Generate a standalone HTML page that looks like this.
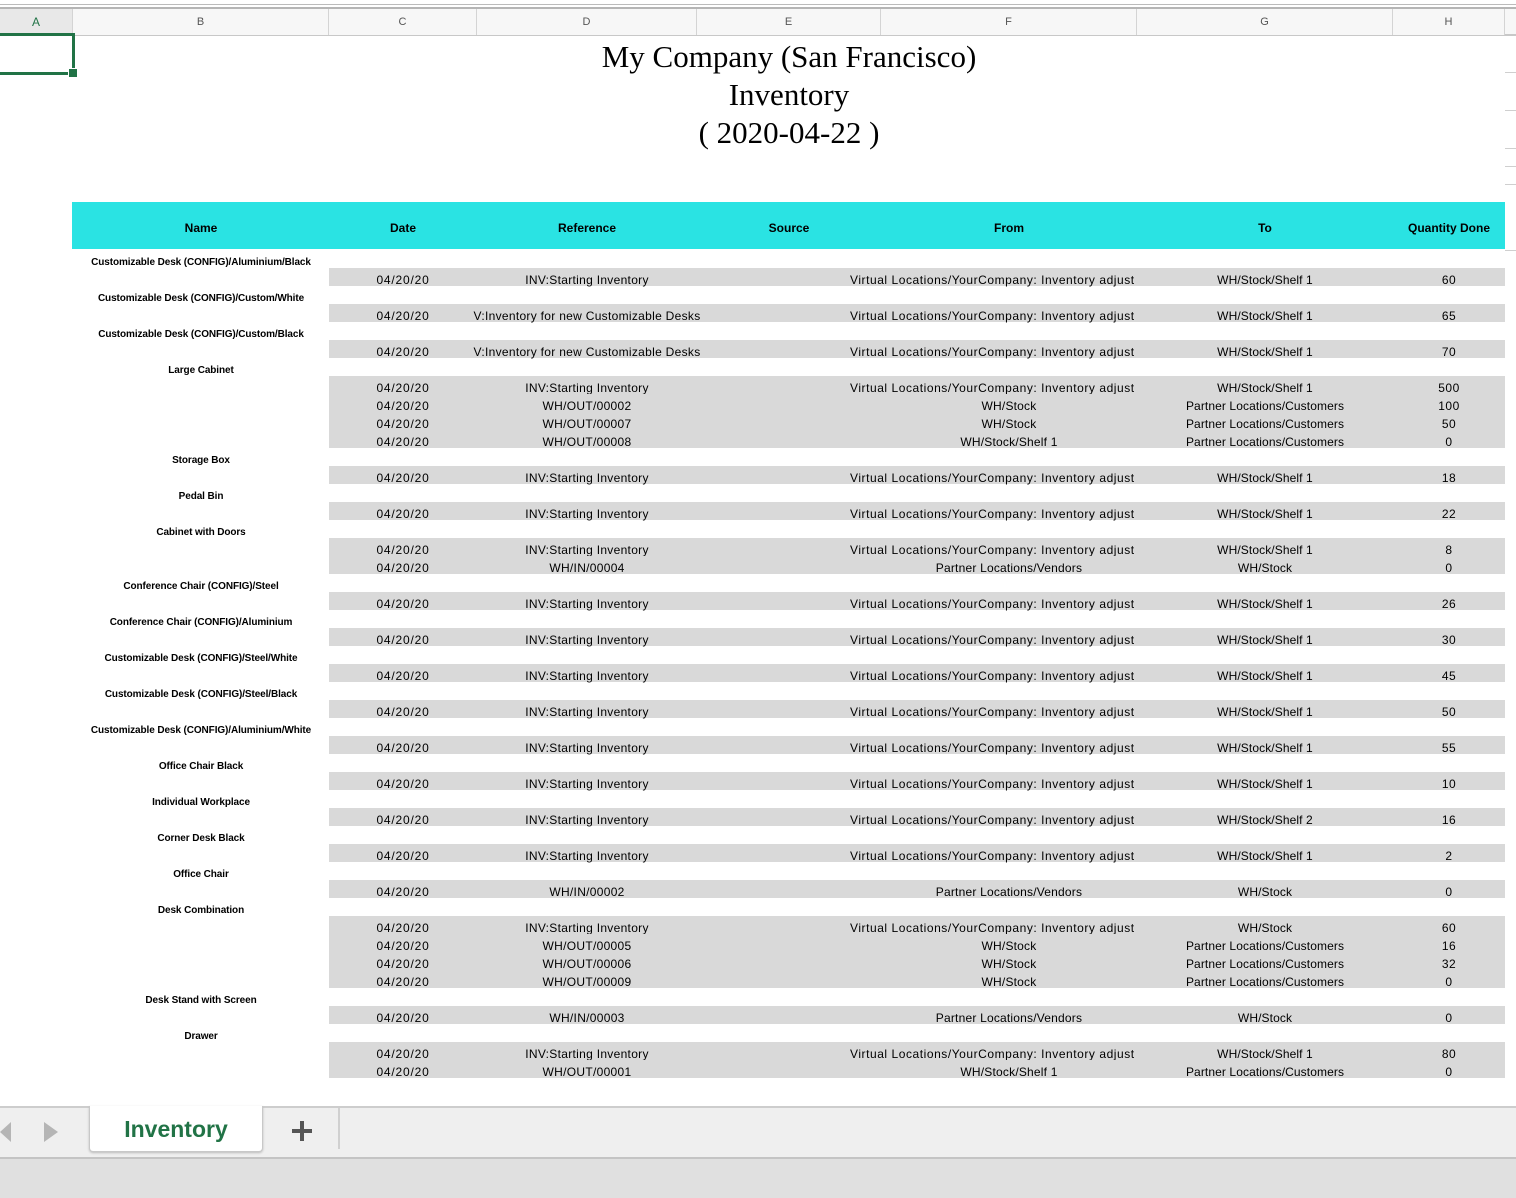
<!DOCTYPE html>
<html><head><meta charset="utf-8"><style>
*{margin:0;padding:0;box-sizing:border-box}
body{width:1516px;height:1198px;background:#fff;position:relative;overflow:hidden;font-family:"Liberation Sans",sans-serif;color:#000}
.ab{position:absolute}
.colhdr{position:absolute;top:9px;height:26px;border-right:1px solid #d4d4d4;color:#555;font-size:11px;text-align:center;line-height:26px;background:#f7f7f7}
.row{position:absolute;left:0;width:1505px;height:18px;font-size:12px;line-height:18px;white-space:nowrap}
.g{background:#d9d9d9;left:329px;width:1176px}
.c{position:absolute;top:3px;text-align:center}
.name{position:absolute;left:73px;width:256px;top:4px;text-align:center;font-weight:bold;font-size:10px;letter-spacing:-0.1px;line-height:18px}
.dt{left:0;width:148px;letter-spacing:0.8px}
.rf{left:98px;width:320px;letter-spacing:0.3px}
.fr{left:552px;width:256px;letter-spacing:0.2px}
.fl{left:521px;width:287px;text-align:left;overflow:hidden;letter-spacing:0.55px}
.to{left:808px;width:256px;letter-spacing:0.1px}
.q{left:1064px;width:112px;letter-spacing:0.5px}
.hd{position:absolute;top:0;height:47px;line-height:52px;text-align:center;font-weight:bold;font-size:12px}
.tick{position:absolute;left:1505px;width:11px;height:1px;background:#cfcfcf}
</style></head><body>
<div class="ab" style="left:0;top:0;width:1516px;height:5px;background:#fff;border-bottom:1px solid #bbb"></div>
<div class="ab" style="left:0;top:7px;width:1516px;height:2px;background:#b5b5b5"></div>
<div class="ab" style="left:0;top:9px;width:1516px;height:27px;background:#f7f7f7;border-bottom:2px solid #c8c8c8"></div>
<div class="colhdr" style="left:0;width:73px;background:#e8e8e8;color:#217346;font-size:12px">A</div>
<div class="colhdr" style="left:73px;width:256px">B</div>
<div class="colhdr" style="left:329px;width:148px">C</div>
<div class="colhdr" style="left:477px;width:220px">D</div>
<div class="colhdr" style="left:697px;width:184px">E</div>
<div class="colhdr" style="left:881px;width:256px">F</div>
<div class="colhdr" style="left:1137px;width:256px">G</div>
<div class="colhdr" style="left:1393px;width:112px">H</div>
<div class="ab" style="left:0;top:33px;width:75px;height:42px;border:3px solid #217346;border-left:none"></div>
<div class="ab" style="left:68px;top:68px;width:10px;height:10px;background:#217346;border:1px solid #fff"></div>

<div class="ab" style="left:289px;top:38px;width:1000px;text-align:center;font-family:'Liberation Serif',serif;font-size:31px;line-height:38px">My Company (San Francisco)<br>Inventory<br>( 2020-04-22 )</div>

<div class="ab" style="left:72px;top:202px;width:1433px;height:47px;background:#2ae3e3">
<div class="hd" style="left:1px;width:256px">Name</div>
<div class="hd" style="left:257px;width:148px">Date</div>
<div class="hd" style="left:405px;width:220px">Reference</div>
<div class="hd" style="left:625px;width:184px">Source</div>
<div class="hd" style="left:809px;width:256px">From</div>
<div class="hd" style="left:1065px;width:256px">To</div>
<div class="hd" style="left:1321px;width:112px">Quantity Done</div>
</div>

<div class="tick" style="top:72px"></div><div class="tick" style="top:110px"></div><div class="tick" style="top:148px"></div><div class="tick" style="top:166px"></div><div class="tick" style="top:184px"></div><div class="tick" style="top:250px"></div>

<div id="rows">
<div class="row" style="top:250px"><div class="name">Customizable Desk (CONFIG)/Aluminium/Black</div></div>
<div class="row g" style="top:268px"><div class="c dt">04/20/20</div><div class="c rf">INV:Starting Inventory</div><div class="c fl">Virtual Locations/YourCompany: Inventory adjust</div><div class="c to">WH/Stock/Shelf 1</div><div class="c q">60</div></div>
<div class="row" style="top:286px"><div class="name">Customizable Desk (CONFIG)/Custom/White</div></div>
<div class="row g" style="top:304px"><div class="c dt">04/20/20</div><div class="c rf">V:Inventory for new Customizable Desks</div><div class="c fl">Virtual Locations/YourCompany: Inventory adjust</div><div class="c to">WH/Stock/Shelf 1</div><div class="c q">65</div></div>
<div class="row" style="top:322px"><div class="name">Customizable Desk (CONFIG)/Custom/Black</div></div>
<div class="row g" style="top:340px"><div class="c dt">04/20/20</div><div class="c rf">V:Inventory for new Customizable Desks</div><div class="c fl">Virtual Locations/YourCompany: Inventory adjust</div><div class="c to">WH/Stock/Shelf 1</div><div class="c q">70</div></div>
<div class="row" style="top:358px"><div class="name">Large Cabinet</div></div>
<div class="row g" style="top:376px"><div class="c dt">04/20/20</div><div class="c rf">INV:Starting Inventory</div><div class="c fl">Virtual Locations/YourCompany: Inventory adjust</div><div class="c to">WH/Stock/Shelf 1</div><div class="c q">500</div></div>
<div class="row g" style="top:394px"><div class="c dt">04/20/20</div><div class="c rf">WH/OUT/00002</div><div class="c fr">WH/Stock</div><div class="c to">Partner Locations/Customers</div><div class="c q">100</div></div>
<div class="row g" style="top:412px"><div class="c dt">04/20/20</div><div class="c rf">WH/OUT/00007</div><div class="c fr">WH/Stock</div><div class="c to">Partner Locations/Customers</div><div class="c q">50</div></div>
<div class="row g" style="top:430px"><div class="c dt">04/20/20</div><div class="c rf">WH/OUT/00008</div><div class="c fr">WH/Stock/Shelf 1</div><div class="c to">Partner Locations/Customers</div><div class="c q">0</div></div>
<div class="row" style="top:448px"><div class="name">Storage Box</div></div>
<div class="row g" style="top:466px"><div class="c dt">04/20/20</div><div class="c rf">INV:Starting Inventory</div><div class="c fl">Virtual Locations/YourCompany: Inventory adjust</div><div class="c to">WH/Stock/Shelf 1</div><div class="c q">18</div></div>
<div class="row" style="top:484px"><div class="name">Pedal Bin</div></div>
<div class="row g" style="top:502px"><div class="c dt">04/20/20</div><div class="c rf">INV:Starting Inventory</div><div class="c fl">Virtual Locations/YourCompany: Inventory adjust</div><div class="c to">WH/Stock/Shelf 1</div><div class="c q">22</div></div>
<div class="row" style="top:520px"><div class="name">Cabinet with Doors</div></div>
<div class="row g" style="top:538px"><div class="c dt">04/20/20</div><div class="c rf">INV:Starting Inventory</div><div class="c fl">Virtual Locations/YourCompany: Inventory adjust</div><div class="c to">WH/Stock/Shelf 1</div><div class="c q">8</div></div>
<div class="row g" style="top:556px"><div class="c dt">04/20/20</div><div class="c rf">WH/IN/00004</div><div class="c fr">Partner Locations/Vendors</div><div class="c to">WH/Stock</div><div class="c q">0</div></div>
<div class="row" style="top:574px"><div class="name">Conference Chair (CONFIG)/Steel</div></div>
<div class="row g" style="top:592px"><div class="c dt">04/20/20</div><div class="c rf">INV:Starting Inventory</div><div class="c fl">Virtual Locations/YourCompany: Inventory adjust</div><div class="c to">WH/Stock/Shelf 1</div><div class="c q">26</div></div>
<div class="row" style="top:610px"><div class="name">Conference Chair (CONFIG)/Aluminium</div></div>
<div class="row g" style="top:628px"><div class="c dt">04/20/20</div><div class="c rf">INV:Starting Inventory</div><div class="c fl">Virtual Locations/YourCompany: Inventory adjust</div><div class="c to">WH/Stock/Shelf 1</div><div class="c q">30</div></div>
<div class="row" style="top:646px"><div class="name">Customizable Desk (CONFIG)/Steel/White</div></div>
<div class="row g" style="top:664px"><div class="c dt">04/20/20</div><div class="c rf">INV:Starting Inventory</div><div class="c fl">Virtual Locations/YourCompany: Inventory adjust</div><div class="c to">WH/Stock/Shelf 1</div><div class="c q">45</div></div>
<div class="row" style="top:682px"><div class="name">Customizable Desk (CONFIG)/Steel/Black</div></div>
<div class="row g" style="top:700px"><div class="c dt">04/20/20</div><div class="c rf">INV:Starting Inventory</div><div class="c fl">Virtual Locations/YourCompany: Inventory adjust</div><div class="c to">WH/Stock/Shelf 1</div><div class="c q">50</div></div>
<div class="row" style="top:718px"><div class="name">Customizable Desk (CONFIG)/Aluminium/White</div></div>
<div class="row g" style="top:736px"><div class="c dt">04/20/20</div><div class="c rf">INV:Starting Inventory</div><div class="c fl">Virtual Locations/YourCompany: Inventory adjust</div><div class="c to">WH/Stock/Shelf 1</div><div class="c q">55</div></div>
<div class="row" style="top:754px"><div class="name">Office Chair Black</div></div>
<div class="row g" style="top:772px"><div class="c dt">04/20/20</div><div class="c rf">INV:Starting Inventory</div><div class="c fl">Virtual Locations/YourCompany: Inventory adjust</div><div class="c to">WH/Stock/Shelf 1</div><div class="c q">10</div></div>
<div class="row" style="top:790px"><div class="name">Individual Workplace</div></div>
<div class="row g" style="top:808px"><div class="c dt">04/20/20</div><div class="c rf">INV:Starting Inventory</div><div class="c fl">Virtual Locations/YourCompany: Inventory adjust</div><div class="c to">WH/Stock/Shelf 2</div><div class="c q">16</div></div>
<div class="row" style="top:826px"><div class="name">Corner Desk Black</div></div>
<div class="row g" style="top:844px"><div class="c dt">04/20/20</div><div class="c rf">INV:Starting Inventory</div><div class="c fl">Virtual Locations/YourCompany: Inventory adjust</div><div class="c to">WH/Stock/Shelf 1</div><div class="c q">2</div></div>
<div class="row" style="top:862px"><div class="name">Office Chair</div></div>
<div class="row g" style="top:880px"><div class="c dt">04/20/20</div><div class="c rf">WH/IN/00002</div><div class="c fr">Partner Locations/Vendors</div><div class="c to">WH/Stock</div><div class="c q">0</div></div>
<div class="row" style="top:898px"><div class="name">Desk Combination</div></div>
<div class="row g" style="top:916px"><div class="c dt">04/20/20</div><div class="c rf">INV:Starting Inventory</div><div class="c fl">Virtual Locations/YourCompany: Inventory adjust</div><div class="c to">WH/Stock</div><div class="c q">60</div></div>
<div class="row g" style="top:934px"><div class="c dt">04/20/20</div><div class="c rf">WH/OUT/00005</div><div class="c fr">WH/Stock</div><div class="c to">Partner Locations/Customers</div><div class="c q">16</div></div>
<div class="row g" style="top:952px"><div class="c dt">04/20/20</div><div class="c rf">WH/OUT/00006</div><div class="c fr">WH/Stock</div><div class="c to">Partner Locations/Customers</div><div class="c q">32</div></div>
<div class="row g" style="top:970px"><div class="c dt">04/20/20</div><div class="c rf">WH/OUT/00009</div><div class="c fr">WH/Stock</div><div class="c to">Partner Locations/Customers</div><div class="c q">0</div></div>
<div class="row" style="top:988px"><div class="name">Desk Stand with Screen</div></div>
<div class="row g" style="top:1006px"><div class="c dt">04/20/20</div><div class="c rf">WH/IN/00003</div><div class="c fr">Partner Locations/Vendors</div><div class="c to">WH/Stock</div><div class="c q">0</div></div>
<div class="row" style="top:1024px"><div class="name">Drawer</div></div>
<div class="row g" style="top:1042px"><div class="c dt">04/20/20</div><div class="c rf">INV:Starting Inventory</div><div class="c fl">Virtual Locations/YourCompany: Inventory adjust</div><div class="c to">WH/Stock/Shelf 1</div><div class="c q">80</div></div>
<div class="row g" style="top:1060px"><div class="c dt">04/20/20</div><div class="c rf">WH/OUT/00001</div><div class="c fr">WH/Stock/Shelf 1</div><div class="c to">Partner Locations/Customers</div><div class="c q">0</div></div>
</div>

<div class="ab" style="left:0;top:1106px;width:1516px;height:53px;background:#efefef;border-top:2px solid #cdcdcd;border-bottom:2px solid #c4c4c4"></div>
<div class="ab" style="left:0;top:1122px;width:0;height:0;border-top:10px solid transparent;border-bottom:10px solid transparent;border-right:11px solid #b5b5b5"></div>
<div class="ab" style="left:44px;top:1122px;width:0;height:0;border-top:10px solid transparent;border-bottom:10px solid transparent;border-left:14px solid #b5b5b5"></div>
<div class="ab" style="left:89px;top:1106px;width:174px;height:46px;background:#fff;border:1px solid #c8c8c8;border-top:none;border-radius:0 0 4px 4px;box-shadow:0 1px 2px #bbb;text-align:center;font-weight:bold;font-size:23px;color:#217346;line-height:46px">Inventory</div>
<div class="ab" style="left:292px;top:1129px;width:20px;height:4px;background:#555"></div>
<div class="ab" style="left:300px;top:1121px;width:4px;height:20px;background:#555"></div>
<div class="ab" style="left:338px;top:1108px;width:2px;height:41px;background:#d0d0d0"></div>
<div class="ab" style="left:0;top:1159px;width:1516px;height:39px;background:#e0e0e0"></div>
</body></html>
